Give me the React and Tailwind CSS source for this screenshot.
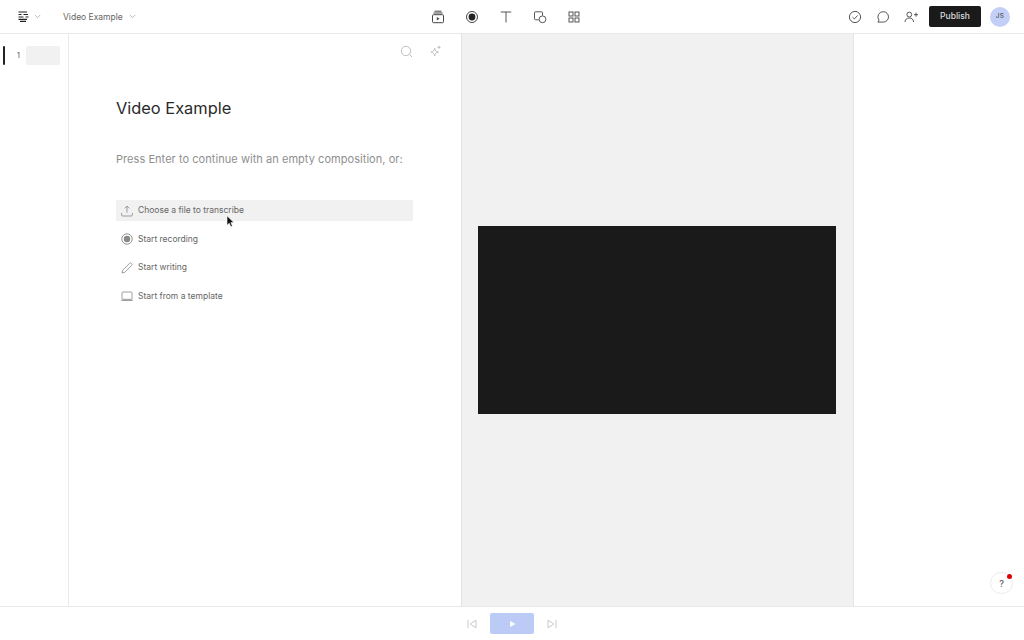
const ic = "fill-none stroke-current";

function LogoIcon() {
  return (
    <svg width="11" height="11" viewBox="0 0 11 11" className="text-[#222]">
      <path d="M.5 1h8.500M.5 3.500h3M5.500 3.500h4.500M.5 6h5M7.500 6h3M.5 8.300h8.500M2 10.300h6" stroke="currentColor" strokeWidth="1.200" fill="none" />
    </svg>
  );
}
function Chevron({ className = "" }) {
  return (
    <svg width="7" height="5" viewBox="0 0 7 5" className={className}>
      <path d="M.8 1l2.700 2.700L6.200 1" stroke="#999" strokeWidth=".7" fill="none" />
    </svg>
  );
}
function Tool({ children }) {
  return <div className="flex h-6 w-6 items-center justify-center text-[#444]">{children}</div>;
}

function TopBar() {
  return (
    <header className="relative flex h-[34px] shrink-0 items-center justify-between border-b border-[#e9e9e9] bg-white">
      <div className="flex items-center">
        <div className="ml-[18px] flex items-center gap-[5px]">
          <LogoIcon />
          <Chevron />
        </div>
        <div className="ml-[22px] flex items-center gap-[6px]">
          <span className="translate-y-[0.5px] text-[8.500px] text-[#666]">Video Example</span>
          <Chevron />
        </div>
      </div>
      <div className="absolute left-[426px] top-[5px] flex items-center gap-[10px]">
        <Tool>
          <svg width="14" height="14" viewBox="0 0 14 14" className={ic}>
            <path d="M3.500 1.200h7M2.500 3h9" strokeWidth="1" />
            <rect x="1.500" y="4.700" width="11" height="8" rx="1" strokeWidth="1" />
            <path d="M5.800 6.900v3.600l2.800-1.800z" fill="currentColor" stroke="none" />
          </svg>
        </Tool>
        <Tool>
          <svg width="14" height="14" viewBox="0 0 14 14" className={ic}>
            <circle cx="7" cy="7" r="5.500" strokeWidth="1" />
            <circle cx="7" cy="7" r="3.400" fill="#222" stroke="none" />
          </svg>
        </Tool>
        <Tool>
          <svg width="14" height="14" viewBox="0 0 14 14" className={ic}>
            <path d="M1.800 2h10.400M7 2v10.500" strokeWidth=".9" />
          </svg>
        </Tool>
        <Tool>
          <svg width="14" height="14" viewBox="0 0 14 14" className={ic}>
            <path d="M5.800 9.800H2.500a1 1 0 0 1-1-1v-6a1 1 0 0 1 1-1h6a1 1 0 0 1 1 1V5.500" strokeWidth=".9" />
            <circle cx="9.500" cy="9.300" r="3.400" strokeWidth=".9" />
          </svg>
        </Tool>
        <Tool>
          <svg width="14" height="14" viewBox="0 0 14 14" className={ic}>
            <rect x="2" y="2" width="4" height="4" strokeWidth=".9" />
            <rect x="8" y="2" width="4" height="4" strokeWidth=".9" />
            <rect x="2" y="8" width="4" height="4" strokeWidth=".9" />
            <rect x="8" y="8" width="4" height="4" strokeWidth=".9" />
          </svg>
        </Tool>
      </div>
      <div className="flex items-center">
        <svg width="14" height="14" viewBox="0 0 14 14" className={`${ic} mr-[14px] text-[#444]`}>
          <circle cx="7" cy="7" r="5.600" strokeWidth=".9" />
          <path d="M4.500 7.200l1.800 1.700 3.300-3.400" strokeWidth=".9" />
        </svg>
        <svg width="14" height="14" viewBox="0 0 14 14" className={`${ic} mr-[14px] text-[#444]`}>
          <path d="M7.300 1.700a5.200 5.200 0 0 1 0 10.400H1.900l1.100-2A5.200 5.200 0 0 1 7.300 1.700z" strokeWidth=".9" />
        </svg>
        <svg width="14" height="14" viewBox="0 0 14 14" className={`${ic} mr-[11px] text-[#444]`}>
          <circle cx="5.300" cy="4.600" r="2.400" strokeWidth=".9" />
          <path d="M1 12c.2-2.700 2-4 4.300-4s4.100 1.300 4.300 4M10 4.700h4M12 2.700v4" strokeWidth=".9" />
        </svg>
        <button className="flex h-[21px] w-[52px] items-center justify-center rounded-[2px] bg-[#1a1a1a] text-[8.500px] font-medium text-[#dedede]">
          Publish
        </button>
        <div className="ml-[9px] mr-[14px] flex h-5 w-5 items-center justify-center rounded-full bg-[#c3cff6] text-[6.500px] font-medium tracking-[0.3px] text-[#555]">
          JS
        </div>
      </div>
    </header>
  );
}

function Sidebar() {
  return (
    <aside className="w-[69px] shrink-0 border-r border-[#e9e9e9] bg-white pt-[12px]">
      <div className="flex h-[19px] items-center">
        <div className="ml-[3px] h-[19px] w-[1.500px] rounded-full bg-[#222]" />
        <span className="ml-[12.500px] w-[5px] translate-y-[0.5px] text-[7px] text-[#444]">1</span>
        <div className="ml-[3.500px] h-[19px] w-[34px] rounded-[2px] bg-[#f1f1f1]" />
      </div>
    </aside>
  );
}

function Row({ icon, label, active }) {
  return (
    <div className={`flex h-[21px] items-center ${active ? "bg-[#f1f1f1]" : ""}`}>
      <div className="ml-[4.500px] flex w-[12px] items-center justify-center text-[#888]">{icon}</div>
      <span className="ml-[5.500px] text-[8.500px] text-[#666]">{label}</span>
    </div>
  );
}

function Editor() {
  return (
    <main className="relative w-[392px] shrink-0 bg-white pl-[47px]">
      <div className="absolute left-[331px] top-[11px] flex items-center gap-[16px] text-[#b8b8b8]">
        <svg width="13" height="13" viewBox="0 0 13 13" className={ic}>
          <circle cx="6" cy="6" r="4.700" strokeWidth=".9" />
          <path d="M9.500 9.500l2.500 2.500" strokeWidth=".9" />
        </svg>
        <svg width="13" height="13" viewBox="0 0 13 13" className={ic}>
          <path d="M5.700 3.200c.4 2.500 1.400 3.500 3.800 3.900-2.400.4-3.400 1.400-3.800 3.900-.4-2.500-1.400-3.500-3.800-3.900 2.400-.4 3.400-1.400 3.800-3.900z" strokeWidth=".9" />
          <path d="M10 .8v3M8.500 2.300h3" strokeWidth=".9" />
        </svg>
      </div>
      <h1 className="pt-[62px] text-[16.400px] leading-[24px] text-[#2a2a2a]">Video Example</h1>
      <p className="mt-[31px] text-[11px] leading-[16px] tracking-[0.05px] text-[#8f8f8f]">
        Press Enter to continue with an empty composition, or:
      </p>
      <div className="mt-[33px] flex w-[297px] flex-col gap-[7.500px]">
        <Row
          active
          label="Choose a file to transcribe"
          icon={
            <svg width="12" height="12" viewBox="0 0 12 12" className={ic}>
              <path d="M6 7.700V1.200M3.800 3.300L6 1l2.200 2.300M.6 8v2a1.200 1.200 0 0 0 1.200 1h8.400a1.200 1.200 0 0 0 1.200-1V8" strokeWidth=".8" />
            </svg>
          }
        />
        <Row
          label="Start recording"
          icon={
            <svg width="12" height="12" viewBox="0 0 12 12" className={ic}>
              <circle cx="6" cy="6" r="5.200" strokeWidth=".9" />
              <circle cx="6" cy="6" r="3.200" fill="currentColor" stroke="none" />
            </svg>
          }
        />
        <Row
          label="Start writing"
          icon={
            <svg width="12" height="12" viewBox="0 0 12 12" className={ic}>
              <path d="M1 11l.7-2.800L8.700 1.200a1 1 0 0 1 1.400 0l.7.7a1 1 0 0 1 0 1.400l-7 7z" strokeWidth=".8" />
            </svg>
          }
        />
        <Row
          label="Start from a template"
          icon={
            <svg width="12" height="12" viewBox="0 0 12 12" className={ic}>
              <rect x="1" y="2" width="10" height="7.300" rx="1" strokeWidth=".8" />
              <path d="M.3 10.300h11.400" strokeWidth="1" />
            </svg>
          }
        />
      </div>
      <svg width="9" height="13" viewBox="0 0 9 13" className="absolute left-[156.500px] top-[181px]">
        <path d="M1 .8v9.400l2.300-2 1.500 3.500 1.600-.7-1.500-3.400h3z" fill="#111" stroke="#fff" strokeWidth=".6" />
      </svg>
    </main>
  );
}

function Stage() {
  return (
    <section className="flex w-[393px] shrink-0 items-center justify-center border-x border-[#e4e4e4] bg-[#f1f1f1]">
      <div className="mr-[1px] h-[188px] w-[358px] bg-[#1a1a1a]" />
    </section>
  );
}

function Footer() {
  return (
    <footer className="flex h-[34px] shrink-0 items-center justify-center gap-[13px] border-t border-[#e9e9e9] bg-white">
      <svg width="10" height="10" viewBox="0 0 10 10" className={`${ic} text-[#c4c4c4]`}>
        <path d="M1 1v8M9 1.200v7.600L3.200 5z" strokeWidth=".9" />
      </svg>
      <button className="flex h-[21px] w-[44px] items-center justify-center rounded-[2px] bg-[#bccbf6]">
        <svg width="8" height="8" viewBox="0 0 8 8" className="translate-x-[1px]">
          <path d="M1.200 1v6l5.300-3z" fill="#fff" />
        </svg>
      </button>
      <svg width="10" height="10" viewBox="0 0 10 10" className={`${ic} text-[#c4c4c4]`}>
        <path d="M9 1v8M1 1.200v7.600L6.800 5z" strokeWidth=".9" />
      </svg>
    </footer>
  );
}

export default function App() {
  return (
    <div className="relative flex h-[640px] w-[1024px] flex-col overflow-hidden bg-white font-['Inter',sans-serif]">
      <TopBar />
      <div className="flex min-h-0 flex-1">
        <Sidebar />
        <Editor />
        <Stage />
        <div className="flex-1 bg-white" />
      </div>
      <Footer />
      <div className="absolute left-[990px] top-[572px] flex h-[22px] w-[23px] items-center justify-center rounded-full border border-[#ececec] bg-white text-[9px] font-medium text-[#555]">
        <span className="translate-y-[0.5px]">?</span>
        <span className="absolute right-0 top-[0.5px] h-[5px] w-[5px] rounded-full bg-[#e00000]" />
      </div>
    </div>
  );
}
